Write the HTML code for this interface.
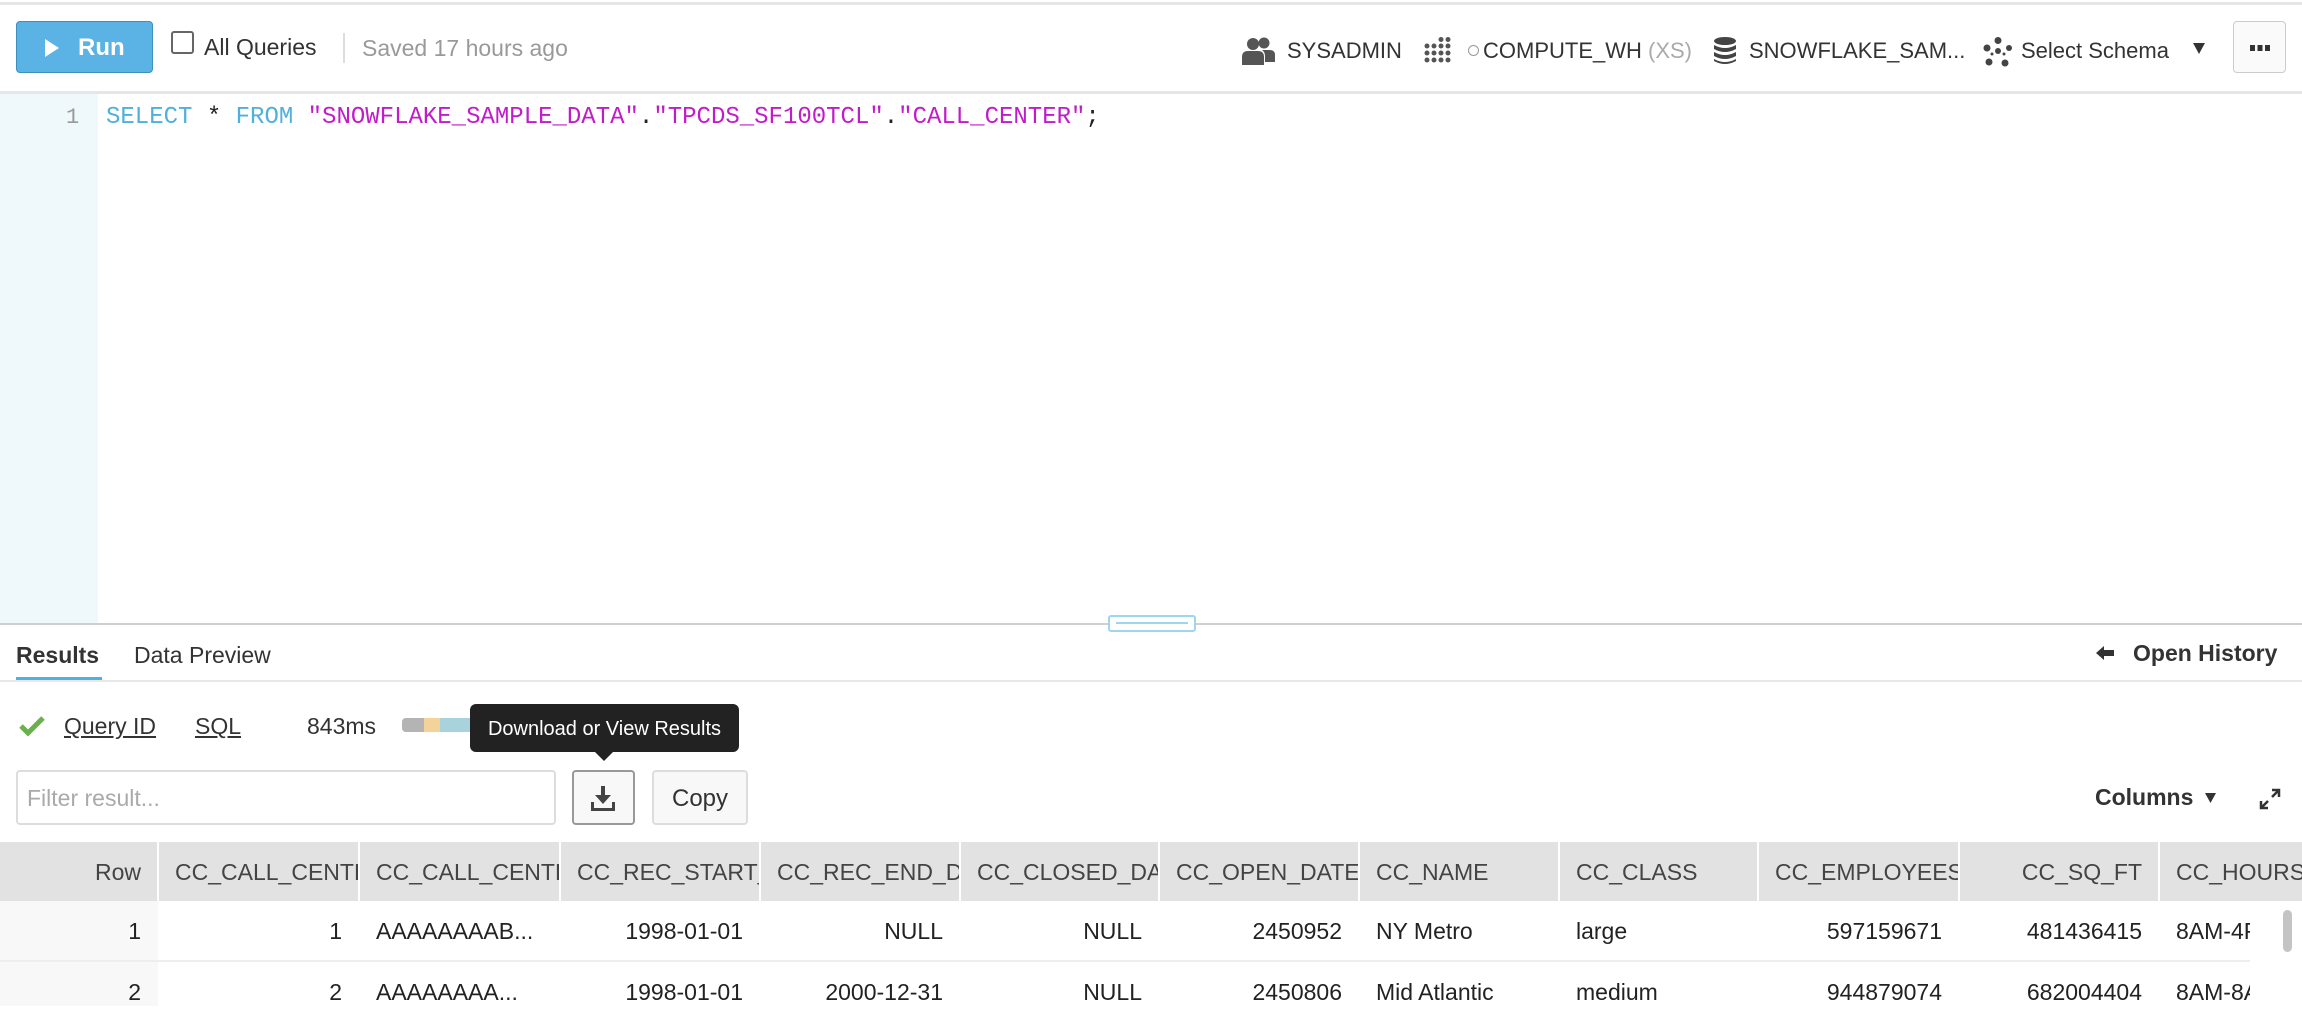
<!DOCTYPE html>
<html><head><meta charset="utf-8">
<style>
*{margin:0;padding:0;box-sizing:border-box}
body{width:2302px;height:1018px;overflow:hidden;background:#fff;font-family:"Liberation Sans",Arial,sans-serif;color:#333;position:relative}
.a{position:absolute;white-space:nowrap}
.t{font-size:23px}
.hdr{position:absolute;top:842px;height:59px;background:#e2e2e2;font-size:23px;color:#444;line-height:61px;overflow:hidden;padding:0 16px}
.c{position:absolute;height:59px;line-height:62px;font-size:23px;color:#222;overflow:hidden;padding:0 16px;white-space:nowrap}
.r{text-align:right}
</style></head><body>
<div class="a" style="left:0;top:2px;width:2302px;height:3px;background:#e6e6e6"></div>
<!-- toolbar -->
<div class="a" style="left:16px;top:21px;width:137px;height:52px;background:#5ab3e4;border:1px solid #3d8fbd;border-radius:4px;color:#fff;font-size:24px;font-weight:bold;line-height:52px">
<svg style="position:absolute;left:28px;top:17px" width="14" height="18" viewBox="0 0 14 18"><path d="M0 0L14 9L0 18Z" fill="#fff"/></svg>
<span style="position:absolute;left:61px">Run</span></div>
<div class="a" style="left:171px;top:31px;width:23px;height:23px;border:2px solid #666;border-radius:3px"></div>
<div class="a t" style="left:204px;top:34px;color:#333">All Queries</div>
<div class="a" style="left:343px;top:33px;width:2px;height:30px;background:#ddd"></div>
<div class="a t" style="left:362px;top:35px;color:#999">Saved 17 hours ago</div>

<svg class="a" style="left:1242px;top:37px" width="34" height="28" viewBox="0 0 34 28"><circle cx="11" cy="7" r="6" fill="#555"/><path d="M0 28V20Q0 14 6 14H16Q22 14 22 20V28Z" fill="#555"/><circle cx="22" cy="6" r="5.5" fill="#555"/><path d="M20 13H28Q33 13 33 18V25H23V19Q23 15 20 13Z" fill="#555"/></svg>
<div class="a" style="left:1287px;top:38px;font-size:22px;color:#333">SYSADMIN</div>
<svg class="a" style="left:1424px;top:37px" width="30" height="26" viewBox="0 0 30 26" fill="#555"><circle cx="3" cy="9" r="2.5"/><circle cx="3" cy="16" r="2.5"/><circle cx="10" cy="9" r="2.5"/><circle cx="10" cy="16" r="2.5"/><circle cx="10" cy="23" r="2.5"/><circle cx="17" cy="2.5" r="2.5"/><circle cx="17" cy="9" r="2.5"/><circle cx="17" cy="16" r="2.5"/><circle cx="17" cy="23" r="2.5"/><circle cx="24" cy="2.5" r="2.5"/><circle cx="24" cy="9" r="2.5"/><circle cx="24" cy="16" r="2.5"/><circle cx="24" cy="23" r="2.5"/><circle cx="3" cy="23" r="2.5"/></svg>
<div class="a" style="left:1468px;top:45px;width:11px;height:11px;border:1.5px solid #999;border-radius:50%"></div>
<div class="a" style="left:1483px;top:38px;font-size:22px;color:#333">COMPUTE_WH <span style="color:#aaa">(XS)</span></div>
<svg class="a" style="left:1713px;top:37px" width="24" height="28" viewBox="0 0 24 28" fill="#444"><ellipse cx="12" cy="4" rx="11" ry="4"/><path d="M1 8Q12 14 23 8V12Q12 18 1 12Z"/><path d="M1 15Q12 21 23 15V19Q12 25 1 19Z"/><path d="M1 22Q12 28 23 22V24Q12 30 1 24Z"/></svg>
<div class="a" style="left:1749px;top:38px;font-size:22px;color:#333">SNOWFLAKE_SAM...</div>
<svg class="a" style="left:1983px;top:37px" width="30" height="30" viewBox="0 0 30 30" fill="#444"><circle cx="15" cy="3.5" r="3.5"/><circle cx="4" cy="11" r="3.5"/><circle cx="26" cy="11" r="3"/><circle cx="15" cy="14" r="3"/><circle cx="6" cy="25" r="3.5"/><circle cx="22" cy="26" r="3.5"/><circle cx="9" cy="17" r="1.5"/><circle cx="21" cy="17" r="1.5"/></svg>
<div class="a" style="left:2021px;top:38px;font-size:22px;color:#333">Select Schema</div>
<svg class="a" style="left:2193px;top:43px" width="12" height="11" viewBox="0 0 13 12"><path d="M0 0H13L6.5 12Z" fill="#333"/></svg>
<div class="a" style="left:2233px;top:21px;width:53px;height:52px;border:1px solid #ccc;border-radius:4px;background:#fafafa"></div>
<svg class="a" style="left:2250px;top:45px" width="20" height="6" viewBox="0 0 20 6" fill="#333"><rect x="0" y="0" width="5" height="6"/><rect x="7.5" y="0" width="5" height="6"/><rect x="15" y="0" width="5" height="6"/></svg>
<div class="a" style="left:0;top:91px;width:2302px;height:3px;background:#e6e6e6"></div>

<!-- editor -->
<div class="a" style="left:0;top:94px;width:98px;height:530px;background:#eff9fc"></div>
<div class="a" style="left:66px;top:105px;font-family:'Liberation Mono',monospace;font-size:22px;color:#999">1</div>
<div class="a" style="left:106px;top:104px;font-family:'Liberation Mono',monospace;font-size:24px;color:#222"><span style="color:#4fb0db">SELECT</span> * <span style="color:#4fb0db">FROM</span> <span style="color:#c21bc9">"SNOWFLAKE_SAMPLE_DATA"</span>.<span style="color:#c21bc9">"TPCDS_SF100TCL"</span>.<span style="color:#c21bc9">"CALL_CENTER"</span>;</div>
<div class="a" style="left:0;top:623px;width:2302px;height:2px;background:#cfcfcf"></div>
<div class="a" style="left:1108px;top:615px;width:88px;height:17px;background:#fff;border:2px solid #9fd6ee;border-radius:3px"></div>
<div class="a" style="left:1116px;top:622px;width:72px;height:2px;background:#9fd6ee"></div>

<!-- tabs -->
<div class="a" style="left:16px;top:642px;font-size:23px;font-weight:bold;color:#333">Results</div>
<div class="a" style="left:134px;top:642px;font-size:23px;color:#333">Data Preview</div>
<div class="a" style="left:16px;top:677px;width:86px;height:4px;background:#4ab3e0"></div>
<div class="a" style="left:0;top:680px;width:2302px;height:2px;background:#e8e8e8"></div>
<svg class="a" style="left:2096px;top:646px" width="18" height="14" viewBox="0 0 18 14"><path d="M0 7L8 0V4H18V10H8V14Z" fill="#333"/></svg>
<div class="a" style="left:2133px;top:640px;font-size:23px;font-weight:bold;color:#333">Open History</div>

<!-- query info -->
<svg class="a" style="left:19px;top:716px" width="26" height="20" viewBox="0 0 26 20"><path d="M2 10L9 17L24 2" stroke="#6ab04c" stroke-width="5" fill="none"/></svg>
<div class="a" style="left:64px;top:713px;font-size:23px;color:#333;text-decoration:underline">Query ID</div>
<div class="a" style="left:195px;top:713px;font-size:23px;color:#333;text-decoration:underline">SQL</div>
<div class="a" style="left:307px;top:713px;font-size:23px;color:#333">843ms</div>
<div class="a" style="left:402px;top:718px;width:80px;height:14px;border-radius:4px;overflow:hidden;background:#a8d3dd"><div style="position:absolute;left:0;width:22px;height:14px;background:#b4b4b4"></div><div style="position:absolute;left:22px;width:16px;height:14px;background:#f3d39a"></div></div>
<div class="a" style="left:470px;top:704px;width:269px;height:48px;background:#222;border-radius:6px;color:#fff;font-size:20px;line-height:50px;text-align:center">Download or View Results</div>
<svg class="a" style="left:594px;top:751px" width="20" height="10" viewBox="0 0 20 10"><path d="M0 0H20L10 10Z" fill="#222"/></svg>

<div class="a" style="left:16px;top:770px;width:540px;height:55px;border:2px solid #ddd;border-radius:4px"></div>
<div class="a" style="left:27px;top:785px;font-size:23px;color:#aaa">Filter result...</div>
<div class="a" style="left:572px;top:770px;width:63px;height:55px;border:2px solid #999;border-radius:4px;background:#f8f8f8"></div>
<svg class="a" style="left:590px;top:786px" width="26" height="26" viewBox="0 0 26 26" fill="#444"><rect x="11" y="0" width="4" height="11"/><path d="M5 9H21L13 18Z"/><rect x="1" y="16" width="3" height="9"/><rect x="22" y="16" width="3" height="9"/><rect x="1" y="22" width="24" height="3"/></svg>
<div class="a" style="left:652px;top:770px;width:96px;height:55px;border:2px solid #ddd;border-radius:4px;background:#f8f8f8;font-size:24px;color:#333;line-height:53px;text-align:center">Copy</div>
<div class="a" style="left:2095px;top:784px;font-size:23px;font-weight:bold;color:#333">Columns</div>
<svg class="a" style="left:2205px;top:793px" width="11" height="10" viewBox="0 0 11 10"><path d="M0 0H11L5.5 10Z" fill="#333"/></svg>
<svg class="a" style="left:2259px;top:788px" width="22" height="22" viewBox="0 0 22 22" fill="none" stroke="#333" stroke-width="2.5"><path d="M13 2H20V9M20 2L13 9M2 13V20H9M2 20L9 13"/></svg>

<!-- table -->
<div class="a" style="left:0;top:900px;width:158px;height:106px;background:#f8f8f8"></div>
<div class="a" style="left:0;top:960px;width:2250px;height:2px;background:#eee"></div>
<div class="hdr r" style="left:0;width:157px">Row</div>
<div class="hdr" style="left:159px;width:199px">CC_CALL_CENTER_SK</div>
<div class="hdr" style="left:360px;width:199px">CC_CALL_CENTER_ID</div>
<div class="hdr" style="left:561px;width:198px">CC_REC_START_DATE</div>
<div class="hdr" style="left:761px;width:198px">CC_REC_END_DATE</div>
<div class="hdr" style="left:961px;width:197px">CC_CLOSED_DATE_SK</div>
<div class="hdr" style="left:1160px;width:198px">CC_OPEN_DATE_SK</div>
<div class="hdr" style="left:1360px;width:198px">CC_NAME</div>
<div class="hdr" style="left:1560px;width:197px">CC_CLASS</div>
<div class="hdr" style="left:1759px;width:199px">CC_EMPLOYEES</div>
<div class="hdr r" style="left:1960px;width:198px">CC_SQ_FT</div>
<div class="hdr" style="left:2160px;width:142px">CC_HOURS</div>

<div class="c r" style="left:0;top:900px;width:157px">1</div>
<div class="c r" style="left:159px;top:900px;width:199px">1</div>
<div class="c" style="left:360px;top:900px;width:199px">AAAAAAAAB...</div>
<div class="c r" style="left:561px;top:900px;width:198px">1998-01-01</div>
<div class="c r" style="left:761px;top:900px;width:198px">NULL</div>
<div class="c r" style="left:961px;top:900px;width:197px">NULL</div>
<div class="c r" style="left:1160px;top:900px;width:198px">2450952</div>
<div class="c" style="left:1360px;top:900px;width:198px">NY Metro</div>
<div class="c" style="left:1560px;top:900px;width:197px">large</div>
<div class="c r" style="left:1759px;top:900px;width:199px">597159671</div>
<div class="c r" style="left:1960px;top:900px;width:198px">481436415</div>
<div class="c" style="left:2160px;top:900px;width:90px;padding-right:0">8AM-4PM</div>

<div class="c r" style="left:0;top:961px;width:157px">2</div>
<div class="c r" style="left:159px;top:961px;width:199px">2</div>
<div class="c" style="left:360px;top:961px;width:199px">AAAAAAAA...</div>
<div class="c r" style="left:561px;top:961px;width:198px">1998-01-01</div>
<div class="c r" style="left:761px;top:961px;width:198px">2000-12-31</div>
<div class="c r" style="left:961px;top:961px;width:197px">NULL</div>
<div class="c r" style="left:1160px;top:961px;width:198px">2450806</div>
<div class="c" style="left:1360px;top:961px;width:198px">Mid Atlantic</div>
<div class="c" style="left:1560px;top:961px;width:197px">medium</div>
<div class="c r" style="left:1759px;top:961px;width:199px">944879074</div>
<div class="c r" style="left:1960px;top:961px;width:198px">682004404</div>
<div class="c" style="left:2160px;top:961px;width:90px;padding-right:0">8AM-8AM</div>
<div class="a" style="left:2283px;top:910px;width:9px;height:42px;background:#c4c4c4;border-radius:5px"></div>
</body></html>
